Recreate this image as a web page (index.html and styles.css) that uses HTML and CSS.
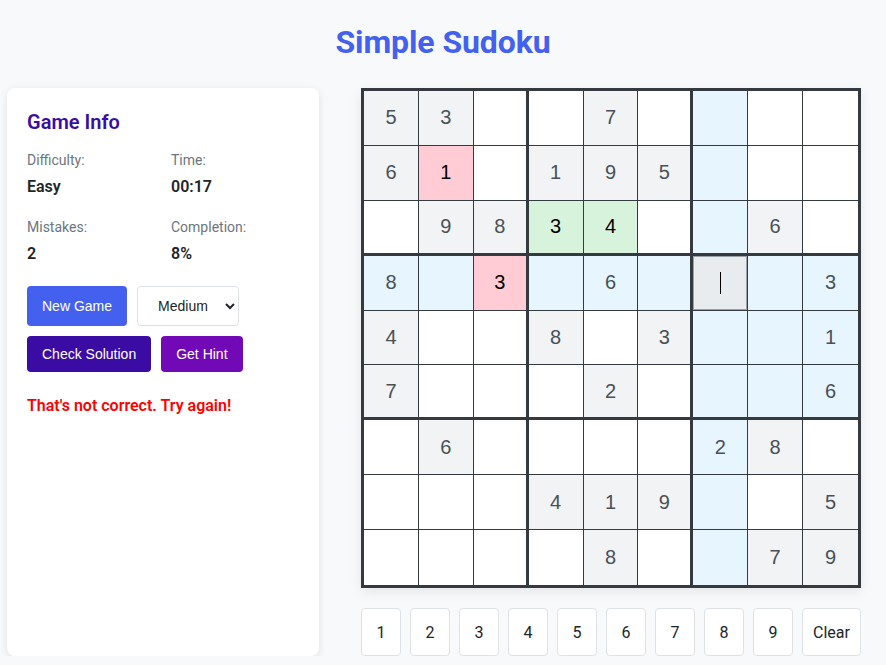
FILE: index.html
```html
<!DOCTYPE html>
<html lang="en">
<head>
<meta charset="utf-8">
<title>Simple Sudoku</title>
<link rel="stylesheet" href="styles.css">
</head>
<body>
<h1 class="title">Simple Sudoku</h1>
<main class="layout">
  <section class="card">
    <h2 class="card-title">Game Info</h2>
    <div class="info-grid">
      <div class="info-item"><div class="info-label">Difficulty:</div><div class="info-value">Easy</div></div>
      <div class="info-item"><div class="info-label">Time:</div><div class="info-value">00:17</div></div>
      <div class="info-item"><div class="info-label">Mistakes:</div><div class="info-value">2</div></div>
      <div class="info-item"><div class="info-label">Completion:</div><div class="info-value">8%</div></div>
    </div>
    <div class="controls">
      <div class="btn-row">
        <button class="btn btn-blue">New Game</button>
        <select class="difficulty">
          <option>Easy</option>
          <option selected>Medium</option>
          <option>Hard</option>
        </select>
      </div>
      <div class="btn-row">
        <button class="btn btn-indigo">Check Solution</button>
        <button class="btn btn-purple">Get Hint</button>
      </div>
    </div>
    <p class="message">That's not correct. Try again!</p>
  </section>

  <section class="play">
    <div class="board">
      <!-- row 1 -->
      <div class="cell fixed">5</div><div class="cell fixed">3</div><div class="cell"></div>
      <div class="cell"></div><div class="cell fixed">7</div><div class="cell"></div>
      <div class="cell hl"></div><div class="cell"></div><div class="cell"></div>
      <!-- row 2 -->
      <div class="cell fixed">6</div><div class="cell error">1</div><div class="cell"></div>
      <div class="cell fixed">1</div><div class="cell fixed">9</div><div class="cell fixed">5</div>
      <div class="cell hl"></div><div class="cell"></div><div class="cell"></div>
      <!-- row 3 -->
      <div class="cell"></div><div class="cell fixed">9</div><div class="cell fixed">8</div>
      <div class="cell correct">3</div><div class="cell correct">4</div><div class="cell"></div>
      <div class="cell hl"></div><div class="cell fixed">6</div><div class="cell"></div>
      <!-- row 4 -->
      <div class="cell fixed hl">8</div><div class="cell hl"></div><div class="cell error">3</div>
      <div class="cell hl"></div><div class="cell fixed hl">6</div><div class="cell hl"></div>
      <div class="cell selected"><span class="caret"></span></div><div class="cell hl"></div><div class="cell fixed hl">3</div>
      <!-- row 5 -->
      <div class="cell fixed">4</div><div class="cell"></div><div class="cell"></div>
      <div class="cell fixed">8</div><div class="cell"></div><div class="cell fixed">3</div>
      <div class="cell hl"></div><div class="cell hl"></div><div class="cell fixed hl">1</div>
      <!-- row 6 -->
      <div class="cell fixed">7</div><div class="cell"></div><div class="cell"></div>
      <div class="cell"></div><div class="cell fixed">2</div><div class="cell"></div>
      <div class="cell hl"></div><div class="cell hl"></div><div class="cell fixed hl">6</div>
      <!-- row 7 -->
      <div class="cell"></div><div class="cell fixed">6</div><div class="cell"></div>
      <div class="cell"></div><div class="cell"></div><div class="cell"></div>
      <div class="cell fixed hl">2</div><div class="cell fixed">8</div><div class="cell"></div>
      <!-- row 8 -->
      <div class="cell"></div><div class="cell"></div><div class="cell"></div>
      <div class="cell fixed">4</div><div class="cell fixed">1</div><div class="cell fixed">9</div>
      <div class="cell hl"></div><div class="cell"></div><div class="cell fixed">5</div>
      <!-- row 9 -->
      <div class="cell"></div><div class="cell"></div><div class="cell"></div>
      <div class="cell"></div><div class="cell fixed">8</div><div class="cell"></div>
      <div class="cell hl"></div><div class="cell fixed">7</div><div class="cell fixed">9</div>
    </div>
    <div class="numpad">
      <button class="num">1</button>
      <button class="num">2</button>
      <button class="num">3</button>
      <button class="num">4</button>
      <button class="num">5</button>
      <button class="num">6</button>
      <button class="num">7</button>
      <button class="num">8</button>
      <button class="num">9</button>
      <button class="num num-clear">Clear</button>
    </div>
  </section>
</main>
</body>
</html>
```

FILE: styles.css
```css
* { box-sizing: border-box; }

html, body {
  margin: 0;
  padding: 0;
  background: #f8f9fa;
  font-family: Roboto, "Liberation Sans", Arial, sans-serif;
  color: #212529;
}

.title {
  margin: 23px 0 27px;
  font-size: 32px;
  line-height: 38px;
  font-weight: 700;
  color: #4361ee;
  text-align: center;
  letter-spacing: -0.1px;
}

.layout {
  display: flex;
  align-items: stretch;
  gap: 42px;
  padding: 0 7px;
}

.card {
  width: 312px;
  flex: none;
  background: #fff;
  border-radius: 8px;
  box-shadow: 0 2px 8px rgba(0, 0, 0, 0.1);
  padding: 20px;
}

.card-title {
  margin: 0 0 14px;
  font-size: 20px;
  line-height: 28px;
  font-weight: 600;
  color: #3a0ca3;
}

.info-grid {
  display: grid;
  grid-template-columns: 1fr 1fr;
  column-gap: 16px;
  row-gap: 18px;
}

.info-label {
  font-size: 14px;
  line-height: 21px;
  color: #6c757d;
  margin-bottom: 4px;
}

.info-value {
  font-size: 16px;
  line-height: 24px;
  font-weight: 600;
  color: #212529;
}

.controls {
  margin-top: 20px;
  display: flex;
  flex-direction: column;
  gap: 10px;
}

.btn-row {
  display: flex;
  gap: 10px;
  align-items: stretch;
}

.btn {
  border: none;
  border-radius: 4px;
  padding: 10px 15px;
  font-family: "Liberation Sans", Arial, sans-serif;
  font-size: 14px;
  line-height: 16px;
  color: #fff;
  cursor: pointer;
}

.btn-blue { background: #4361ee; }
.btn-indigo { background: #3a0ca3; }
.btn-purple { background: #7209b7; }

.difficulty {
  width: 102px;
  height: 40px;
  padding: 0 6px 0 16px;
  border: 1px solid #dee2e6;
  border-radius: 4px;
  background: #fff;
  font-family: "Liberation Sans", Arial, sans-serif;
  font-size: 14px;
  color: #212529;
}

.message {
  margin: 22px 0 0;
  font-size: 16px;
  line-height: 24px;
  font-weight: 600;
  color: #ff0000;
}

.play {
  width: 500px;
  flex: none;
  display: flex;
  flex-direction: column;
}

.board {
  width: 500px;
  height: 500px;
  border: 3px solid #343a40;
  display: grid;
  grid-template-columns: repeat(9, 1fr);
  grid-template-rows: repeat(9, 1fr);
  background: #fff;
  box-shadow: 0 4px 12px rgba(0, 0, 0, 0.08);
}

.cell {
  position: relative;
  display: flex;
  align-items: center;
  justify-content: center;
  border-right: 1px solid #343a40;
  border-bottom: 1px solid #343a40;
  background: #fff;
  font-family: "Liberation Sans", Arial, sans-serif;
  font-size: 20px;
  color: #000;
}

.cell:nth-child(9n+3),
.cell:nth-child(9n+6) { border-right-width: 3px; }
.cell:nth-child(9n) { border-right: none; }
.cell:nth-child(n+19):nth-child(-n+27),
.cell:nth-child(n+46):nth-child(-n+54) { border-bottom-width: 3px; }
.cell:nth-child(n+73) { border-bottom: none; }

.cell.fixed { background: #f1f3f5; color: #495057; }
.cell.hl { background: #e7f5ff; }
.cell.error { background: #ffccd5; color: #000; }
.cell.correct { background: #d8f3dc; color: #000; }
.cell.selected {
  background: #e9ecef;
  box-shadow: inset 0 0 0 1px #9aa1a8;
}

.caret {
  width: 1px;
  height: 22px;
  background: #000;
}

.numpad {
  margin-top: 20px;
  display: flex;
  justify-content: space-between;
}

.num {
  width: 40px;
  height: 48px;
  padding: 0;
  background: #fff;
  border: 1px solid #dee2e6;
  border-radius: 4px;
  font-family: Roboto, "Liberation Sans", Arial, sans-serif;
  font-size: 16px;
  color: #212529;
  cursor: pointer;
}

.num-clear { width: 59px; }
```
